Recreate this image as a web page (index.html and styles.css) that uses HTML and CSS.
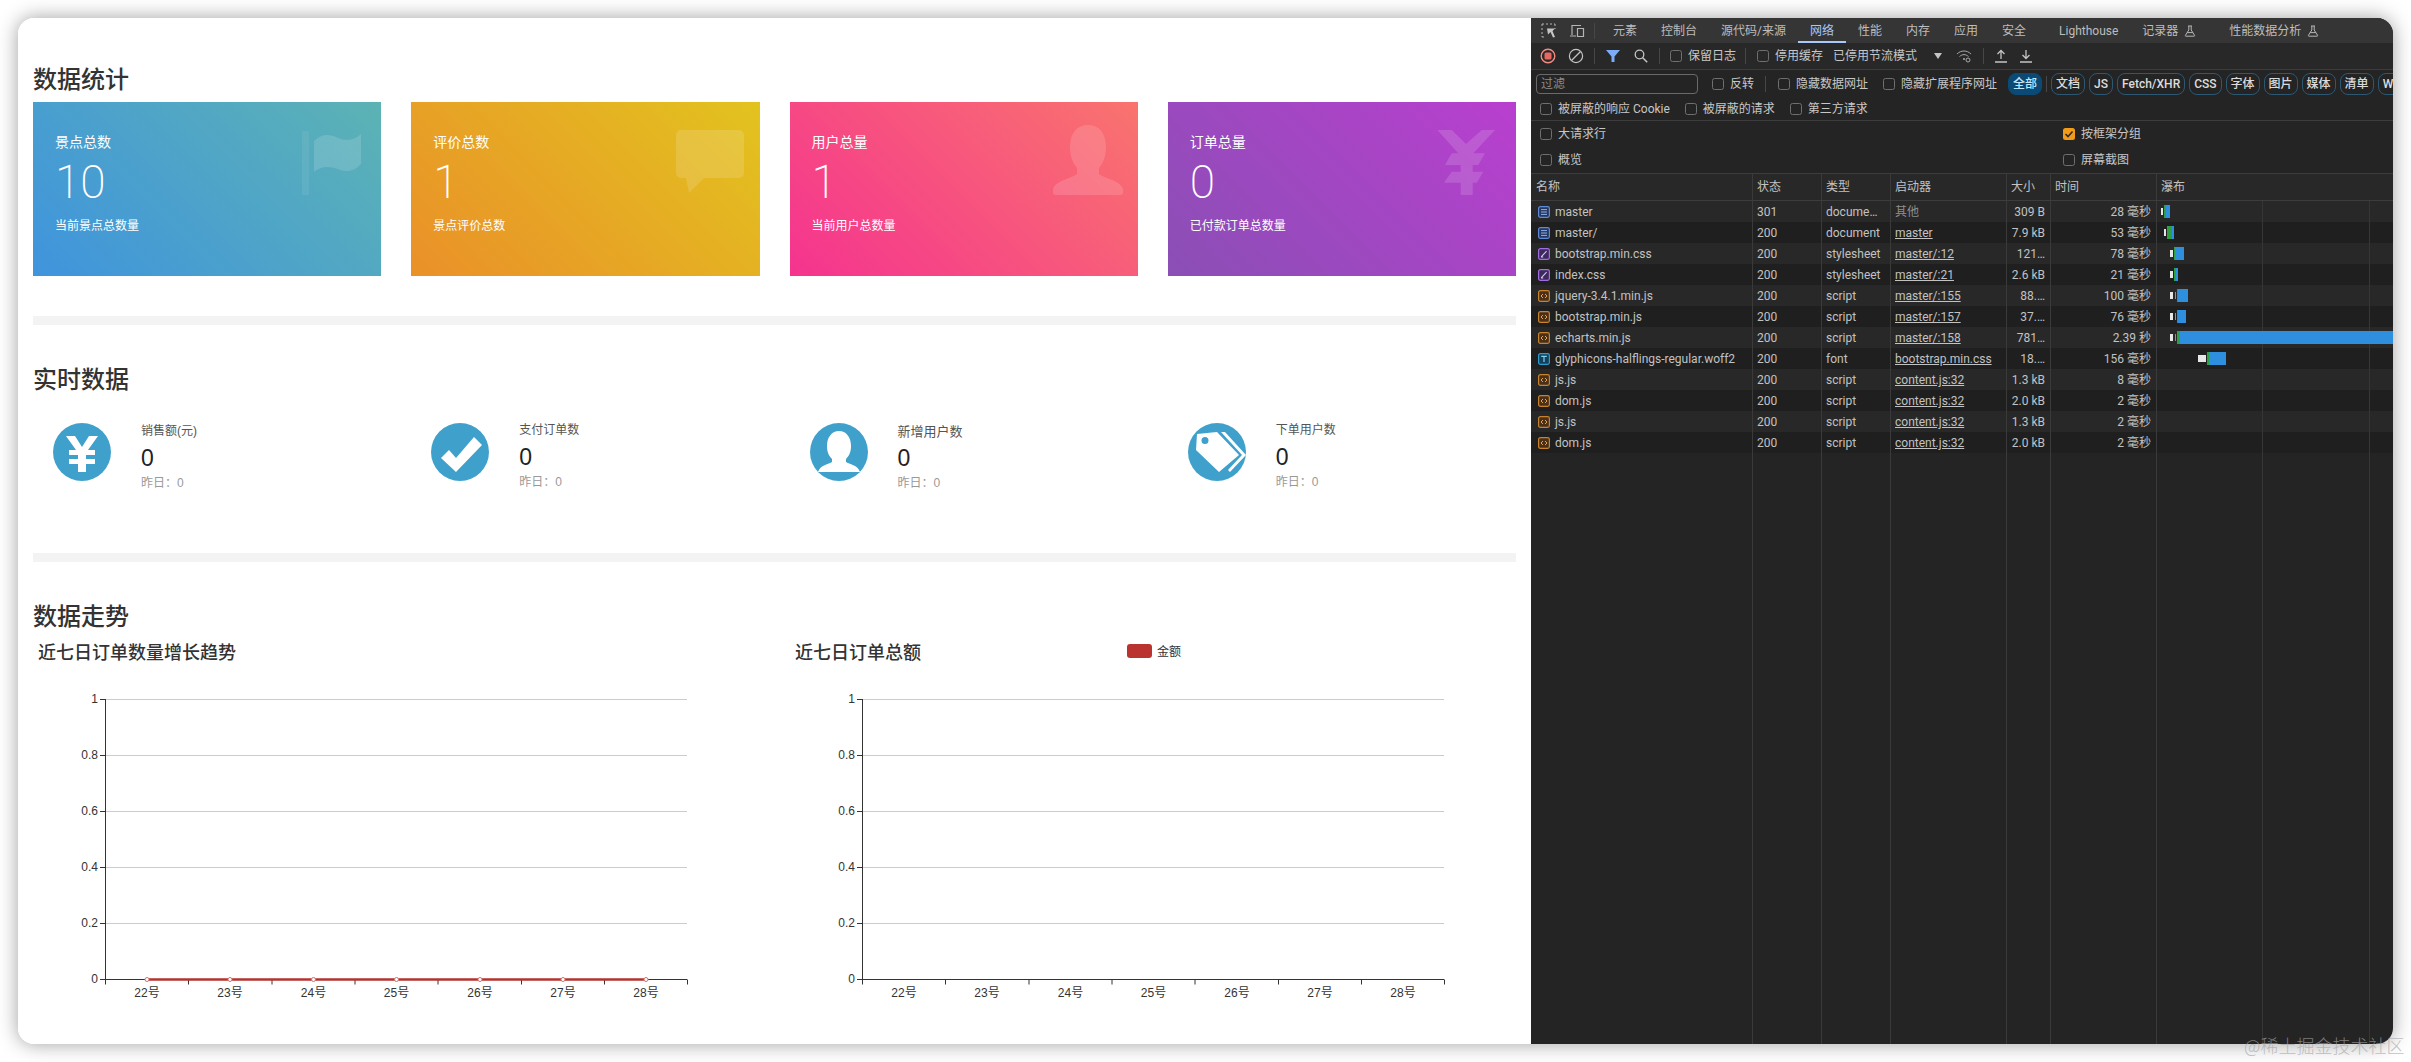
FILE: index.html
```html
<!DOCTYPE html>
<html lang="zh-CN">
<head>
<meta charset="utf-8">
<title>数据统计</title>
<link rel="stylesheet" href="styles.css">
</head>
<body>
<svg class="sprite" aria-hidden="true">
  <symbol id="f-doc" viewBox="0 0 12 12"><rect x=".6" y=".6" width="10.8" height="10.8" rx="1.8" fill="#26365c" stroke="#5f8ad8" stroke-width="1.2"/><path d="M3 3.6h6M3 6h6M3 8.4h6" stroke="#8fb0ee" stroke-width="1"/></symbol>
  <symbol id="f-css" viewBox="0 0 12 12"><rect x=".6" y=".6" width="10.8" height="10.8" rx="1.8" fill="#3d2a5c" stroke="#a06ee0" stroke-width="1.2"/><path d="M3.2 8.8 8.6 3.2M3 9h2.2" stroke="#d9c4f5" stroke-width="1.1"/></symbol>
  <symbol id="f-js" viewBox="0 0 12 12"><rect x=".6" y=".6" width="10.8" height="10.8" rx="1.8" fill="#4a3018" stroke="#c9822e" stroke-width="1.2"/><path d="M5 4 3 6l2 2M7 4l2 2-2 2" fill="none" stroke="#e5a354" stroke-width="1"/></symbol>
  <symbol id="f-font" viewBox="0 0 12 12"><rect x=".6" y=".6" width="10.8" height="10.8" rx="1.8" fill="#15405a" stroke="#2f9cd0" stroke-width="1.2"/><path d="M3.2 3.4h5.6M6 3.4v5.6" stroke="#7fd0f2" stroke-width="1.2"/></symbol>
  <symbol id="flask" viewBox="0 0 12 12"><path d="M4 1h4M4.8 1v4L1.4 10.4c-.2.4 0 .8.5.8h8.2c.5 0 .7-.4.5-.8L7.2 5V1M3.2 7.6h5.6" fill="none" stroke="#b5b5b5" stroke-width="1"/></symbol>
</svg>

<div class="window">
  <main class="page">
    <h2 class="section-title">数据统计</h2>
    <div class="cards">
      <article class="card card-blue">
        <svg class="card-icon" viewBox="0 0 70 70"><path class="faint" d="M7 6h5a1 1 0 0 1 1 1v62a1 1 0 0 1-1 1H7a1 1 0 0 1-1-1V7a1 1 0 0 1 1-1z"/><path d="M18 16c8-8 16-7 24-3 8 3 16 3 23-4v30c-6 7-14 9-23 5-9-3-17-3-24 3z"/></svg>
        <div class="card-label">景点总数</div>
        <div class="card-num">10</div>
        <div class="card-sub">当前景点总数量</div>
      </article>
      <article class="card card-orange">
        <svg class="card-icon" viewBox="0 0 70 70"><path d="M6 5h58a5 5 0 0 1 5 5v38a5 5 0 0 1-5 5H29L14 68l-3-15H6a5 5 0 0 1-5-5V10a5 5 0 0 1 5-5z"/></svg>
        <div class="card-label">评价总数</div>
        <div class="card-num">1</div>
        <div class="card-sub">景点评价总数</div>
      </article>
      <article class="card card-pink">
        <svg class="card-icon" viewBox="0 0 70 70"><path d="M35 0c11 0 18 8 18 22 0 10-3 16-7 21v6c5 4 22 7 24 15v3a3 3 0 0 1-3 3H3a3 3 0 0 1-3-3v-3c2-8 19-11 24-15v-6c-4-5-7-11-7-21C17 8 24 0 35 0z"/></svg>
        <div class="card-label">用户总量</div>
        <div class="card-num">1</div>
        <div class="card-sub">当前用户总数量</div>
      </article>
      <article class="card card-purple">
        <svg class="card-icon" viewBox="0 0 70 70"><path d="M6.300 5H20.700L35 19 50.700 5H64L42.300 28.300H54L47.300 40H41.700V46.700H52.300L45.700 57.700H41.700V70H29.700V57.700H13L20.700 46.700H29.700V40H14L20.700 28.300H27.300z"/></svg>
        <div class="card-label">订单总量</div>
        <div class="card-num">0</div>
        <div class="card-sub">已付款订单总数量</div>
      </article>
    </div>

    <div class="divider"></div>

    <h2 class="section-title section-gap">实时数据</h2>
    <div class="stats">
      <div class="stat">
        <svg class="stat-icon" viewBox="0 0 58 58"><circle cx="29" cy="29" r="29" fill="#3fa1cb"/><path fill="#fff" d="M13 13h9l7 11 7-11h9L35 27h7v5H33v4h9v5h-9v8h-8v-8h-9v-5h9v-4h-9v-5h7z"/></svg>
        <div class="stat-text">
          <div class="stat-label">销售额(元)</div>
          <div class="stat-num">0</div>
          <div class="stat-prev">昨日：0</div>
        </div>
      </div>
      <div class="stat stat-raised">
        <svg class="stat-icon" viewBox="0 0 58 58"><circle cx="29" cy="29" r="29" fill="#3fa1cb"/><path fill="#fff" d="M10 35l8-8 7 8 18-21 8 8-26 27z"/></svg>
        <div class="stat-text">
          <div class="stat-label">支付订单数</div>
          <div class="stat-num">0</div>
          <div class="stat-prev">昨日：0</div>
        </div>
      </div>
      <div class="stat">
        <svg class="stat-icon" viewBox="0 0 58 58"><circle cx="29" cy="29" r="29" fill="#3fa1cb"/><path fill="#fff" d="M29 8c7 0 12 6 12 15 0 6-2 10-5 13v3c3 2 12 3 14 10H8c2-7 11-8 14-10v-3c-3-3-5-7-5-13C17 14 22 8 29 8z"/></svg>
        <div class="stat-text">
          <div class="stat-label stat-label-lg">新增用户数</div>
          <div class="stat-num">0</div>
          <div class="stat-prev">昨日：0</div>
        </div>
      </div>
      <div class="stat stat-raised">
        <svg class="stat-icon" viewBox="0 0 58 58"><circle cx="29" cy="29" r="29" fill="#3fa1cb"/><path fill="#fff" fill-rule="evenodd" d="M9 11l20-2 22 23-20 17L8 27zM17 14a3.500 3.500 0 1 0 0 7 3.500 3.500 0 0 0 0-7z"/><path fill="#fff" d="M33 9h4l21 23-16 17-2-2 14-15z"/></svg>
        <div class="stat-text">
          <div class="stat-label">下单用户数</div>
          <div class="stat-num">0</div>
          <div class="stat-prev">昨日：0</div>
        </div>
      </div>
    </div>

    <div class="divider divider-2"></div>

    <h2 class="section-title section-gap">数据走势</h2>
    <div class="charts">
      <section class="chart">
        <div class="chart-head"><h3 class="chart-title">近七日订单数量增长趋势</h3></div>
        <svg class="chart-svg" viewBox="0 0 726 378">
          <g class="grid"><path d="M67 33.500H654M67 89.500H654M67 145.500H654M67 201.500H654M67 257.500H654"/></g>
          <g class="axis"><path d="M72.500 33V313.500M67 33.500h5.500M67 89.500h5.500M67 145.500h5.500M67 201.500h5.500M67 257.500h5.500M67 313.500H654M72.500 313.500v5M155.500 313.500v5M239 313.500v5M322 313.500v5M405 313.500v5M488.500 313.500v5M571.500 313.500v5M654.500 313.500v5"/></g>
          <path class="series" d="M114 313.500H613"/>
          <g class="markers"><circle cx="114" cy="313.500" r="2"/><circle cx="197" cy="313.500" r="2"/><circle cx="280.500" cy="313.500" r="2"/><circle cx="363.500" cy="313.500" r="2"/><circle cx="447" cy="313.500" r="2"/><circle cx="530" cy="313.500" r="2"/><circle cx="613" cy="313.500" r="2"/></g>
          <g class="ylab"><text x="65" y="37">1</text><text x="65" y="93">0.8</text><text x="65" y="149">0.6</text><text x="65" y="205">0.4</text><text x="65" y="261">0.2</text><text x="65" y="317">0</text></g>
          <g class="xlab"><text x="114" y="331">22号</text><text x="197" y="331">23号</text><text x="280.500" y="331">24号</text><text x="363.500" y="331">25号</text><text x="447" y="331">26号</text><text x="530" y="331">27号</text><text x="613" y="331">28号</text></g>
        </svg>
      </section>
      <section class="chart">
        <div class="chart-head">
          <h3 class="chart-title">近七日订单总额</h3>
          <div class="legend"><span class="legend-swatch"></span><span>金额</span></div>
        </div>
        <svg class="chart-svg" viewBox="0 0 726 378">
          <g class="grid"><path d="M67 33.500H654M67 89.500H654M67 145.500H654M67 201.500H654M67 257.500H654"/></g>
          <g class="axis"><path d="M72.500 33V313.500M67 33.500h5.500M67 89.500h5.500M67 145.500h5.500M67 201.500h5.500M67 257.500h5.500M67 313.500H654M72.500 313.500v5M155.500 313.500v5M239 313.500v5M322 313.500v5M405 313.500v5M488.500 313.500v5M571.500 313.500v5M654.500 313.500v5"/></g>
          <g class="ylab"><text x="65" y="37">1</text><text x="65" y="93">0.8</text><text x="65" y="149">0.6</text><text x="65" y="205">0.4</text><text x="65" y="261">0.2</text><text x="65" y="317">0</text></g>
          <g class="xlab"><text x="114" y="331">22号</text><text x="197" y="331">23号</text><text x="280.500" y="331">24号</text><text x="363.500" y="331">25号</text><text x="447" y="331">26号</text><text x="530" y="331">27号</text><text x="613" y="331">28号</text></g>
        </svg>
      </section>
    </div>
  </main>

  <aside class="devtools">
    <nav class="dt-tabs">
      <svg class="tab-ico" viewBox="0 0 15 15"><path d="M1 1h2M5 1h2M9 1h2M13 1h1M1 1v2M1 5v2M1 9v2M1 13v1M1 14h2M14 1v2M14 5v1" fill="none" stroke="#b5b5b5" stroke-width="1"/><path d="M6 5.500h8L11.500 8 14 14l-2 .5L9.500 9 7 11.500z" fill="#c5c5c5"/></svg>
      <svg class="tab-ico tab-ico-2" viewBox="0 0 15 15"><path d="M2 12V2.500h9M0 13h6M7.500 5.500h6v8h-6z" fill="none" stroke="#b5b5b5" stroke-width="1.200"/></svg>
      <span class="sep sep-tab"></span>
      <a class="tab tab-first">元素</a>
      <a class="tab">控制台</a>
      <a class="tab">源代码/来源</a>
      <a class="tab tab-on">网络</a>
      <a class="tab">性能</a>
      <a class="tab">内存</a>
      <a class="tab">应用</a>
      <a class="tab">安全</a>
      <a class="tab tab-lh">Lighthouse</a>
      <a class="tab">记录器<svg class="flask"><use href="#flask"/></svg></a>
      <a class="tab tab-perf">性能数据分析<svg class="flask"><use href="#flask"/></svg></a>
    </nav>

    <div class="dt-toolbar">
      <svg class="ti g9" viewBox="0 0 16 16"><circle cx="8" cy="8" r="6.800" fill="none" stroke="#f28b82" stroke-width="1.400"/><rect x="4.500" y="4.500" width="7" height="7" rx="1.500" fill="#e46962"/></svg>
      <svg class="ti g12" viewBox="0 0 16 16"><circle cx="8" cy="8" r="6.600" fill="none" stroke="#c4c4c4" stroke-width="1.200"/><path d="M3.500 12.500l9-9" stroke="#c4c4c4" stroke-width="1.200"/></svg>
      <span class="sep g10"></span>
      <svg class="ti-s g11" viewBox="0 0 14 14"><path d="M0 1h14L8.500 7.500V13h-3V7.500z" fill="#7cacf8"/></svg>
      <svg class="ti-s g14" viewBox="0 0 14 14"><circle cx="5.500" cy="5.500" r="4.300" fill="none" stroke="#c4c4c4" stroke-width="1.300"/><path d="M8.700 8.700l4.500 4.500" stroke="#c4c4c4" stroke-width="1.500"/></svg>
      <span class="sep g11"></span>
      <span class="cb g10"></span><span class="lbl g6">保留日志</span>
      <span class="sep g9"></span>
      <span class="cb g11"></span><span class="lbl g6">停用缓存</span>
      <span class="lbl g10">已停用节流模式</span>
      <svg class="ti-a g17" viewBox="0 0 8 6"><path d="M0 0h8L4 6z" fill="#c4c4c4"/></svg>
      <svg class="ti g14" viewBox="0 0 16 16"><path d="M1 6c4-4 10-4 14 0M3.500 8.500c3-2.500 6-2.500 9 0" fill="none" stroke="#a8a8a8" stroke-width="1"/><circle cx="8" cy="11" r="1" fill="#a8a8a8"/><circle cx="12" cy="12" r="2" fill="none" stroke="#a8a8a8" stroke-width="1"/></svg>
      <span class="sep g11"></span>
      <svg class="ti-u g11" viewBox="0 0 12 14"><path d="M6 10V2M2.500 5L6 1.500 9.500 5M0 13h12" fill="none" stroke="#c4c4c4" stroke-width="1.300"/></svg>
      <svg class="ti-u g13" viewBox="0 0 12 14"><path d="M6 1v8M2.500 6L6 9.500 9.500 6M0 13h12" fill="none" stroke="#c4c4c4" stroke-width="1.300"/></svg>
    </div>

    <div class="dt-filter">
      <div class="filter-row">
        <span class="filter-input">过滤</span>
        <span class="cb g14"></span><span class="lbl g6">反转</span>
        <span class="sep g11"></span>
        <span class="cb g12"></span><span class="lbl g6">隐藏数据网址</span>
        <span class="cb g15"></span><span class="lbl g6">隐藏扩展程序网址</span>
        <span class="chip chip-on g11">全部</span>
        <span class="sep g4"></span>
        <span class="chip g4">文档</span>
        <span class="chip g4">JS</span>
        <span class="chip g4">Fetch/XHR</span>
        <span class="chip g4">CSS</span>
        <span class="chip g4">字体</span>
        <span class="chip g4">图片</span>
        <span class="chip g4">媒体</span>
        <span class="chip g4">清单</span>
        <span class="chip g4">WS</span>
      </div>
      <div class="filter-row filter-row-2">
        <span class="cb"></span><span class="lbl g6">被屏蔽的响应 Cookie</span>
        <span class="cb g15"></span><span class="lbl g6">被屏蔽的请求</span>
        <span class="cb g15"></span><span class="lbl g6">第三方请求</span>
      </div>
    </div>

    <div class="dt-settings">
      <div class="setting"><span class="cb"></span><span class="lbl g6">大请求行</span></div>
      <div class="setting"><span class="cb cb-on"><svg viewBox="0 0 12 12"><path d="M2.500 6l2.500 2.500 4.500-5" fill="none" stroke="#2a2a2a" stroke-width="1.600"/></svg></span><span class="lbl g6">按框架分组</span></div>
      <div class="setting"><span class="cb"></span><span class="lbl g6">概览</span></div>
      <div class="setting"><span class="cb"></span><span class="lbl g6">屏幕截图</span></div>
    </div>

    <div class="net">
      <div class="net-row net-head">
        <div class="c c-name">名称</div><div class="c">状态</div><div class="c">类型</div><div class="c">启动器</div><div class="c">大小</div><div class="c">时间</div><div class="c c-wf">瀑布</div>
      </div>
      <div class="net-body">
        <div class="net-row">
          <div class="c c-name"><svg class="fi"><use href="#f-doc"/></svg>master</div><div class="c">301</div><div class="c">docume…</div><div class="c c-dim">其他</div><div class="c c-r">309 B</div><div class="c c-r">28 毫秒</div>
          <div class="c c-wf"><i class="b b-w" style="left:4px;width:2px"></i><i class="b b-g" style="left:7px;width:2px"></i><i class="b b-b" style="left:9px;width:4px"></i></div>
        </div>
        <div class="net-row">
          <div class="c c-name"><svg class="fi"><use href="#f-doc"/></svg>master/</div><div class="c">200</div><div class="c">document</div><div class="c c-link">master</div><div class="c c-r">7.9 kB</div><div class="c c-r">53 毫秒</div>
          <div class="c c-wf"><i class="b b-w" style="left:7px;width:2px"></i><i class="b b-g" style="left:10px;width:5px"></i><i class="b b-b" style="left:15px;width:2px"></i></div>
        </div>
        <div class="net-row">
          <div class="c c-name"><svg class="fi"><use href="#f-css"/></svg>bootstrap.min.css</div><div class="c">200</div><div class="c">stylesheet</div><div class="c c-link">master/:12</div><div class="c c-r">121…</div><div class="c c-r">78 毫秒</div>
          <div class="c c-wf"><i class="b b-w" style="left:13px;width:3px"></i><i class="b b-g" style="left:17px;width:1px"></i><i class="b b-b" style="left:18px;width:9px"></i></div>
        </div>
        <div class="net-row">
          <div class="c c-name"><svg class="fi"><use href="#f-css"/></svg>index.css</div><div class="c">200</div><div class="c">stylesheet</div><div class="c c-link">master/:21</div><div class="c c-r">2.6 kB</div><div class="c c-r">21 毫秒</div>
          <div class="c c-wf"><i class="b b-w" style="left:13px;width:3px"></i><i class="b b-g" style="left:17px;width:2px"></i><i class="b b-b" style="left:19px;width:2px"></i></div>
        </div>
        <div class="net-row">
          <div class="c c-name"><svg class="fi"><use href="#f-js"/></svg>jquery-3.4.1.min.js</div><div class="c">200</div><div class="c">script</div><div class="c c-link">master/:155</div><div class="c c-r">88.…</div><div class="c c-r">100 毫秒</div>
          <div class="c c-wf"><i class="b b-w" style="left:13px;width:3px"></i><i class="b b-o" style="left:18px;width:1px"></i><i class="b b-g" style="left:20px;width:1px"></i><i class="b b-b" style="left:21px;width:10px"></i></div>
        </div>
        <div class="net-row">
          <div class="c c-name"><svg class="fi"><use href="#f-js"/></svg>bootstrap.min.js</div><div class="c">200</div><div class="c">script</div><div class="c c-link">master/:157</div><div class="c c-r">37.…</div><div class="c c-r">76 毫秒</div>
          <div class="c c-wf"><i class="b b-w" style="left:13px;width:3px"></i><i class="b b-o" style="left:18px;width:1px"></i><i class="b b-g" style="left:20px;width:1px"></i><i class="b b-b" style="left:21px;width:8px"></i></div>
        </div>
        <div class="net-row">
          <div class="c c-name"><svg class="fi"><use href="#f-js"/></svg>echarts.min.js</div><div class="c">200</div><div class="c">script</div><div class="c c-link">master/:158</div><div class="c c-r">781…</div><div class="c c-r">2.39 秒</div>
          <div class="c c-wf"><i class="b b-w" style="left:13px;width:3px"></i><i class="b b-o" style="left:18px;width:1px"></i><i class="b b-g" style="left:20px;width:3px"></i><i class="b b-b" style="left:23px;width:213px"></i></div>
        </div>
        <div class="net-row">
          <div class="c c-name"><svg class="fi"><use href="#f-font"/></svg>glyphicons-halflings-regular.woff2</div><div class="c">200</div><div class="c">font</div><div class="c c-link">bootstrap.min.css</div><div class="c c-r">18.…</div><div class="c c-r">156 毫秒</div>
          <div class="c c-wf"><i class="b b-w" style="left:41px;width:8px"></i><i class="b b-g" style="left:50px;width:2px"></i><i class="b b-b" style="left:52px;width:17px"></i></div>
        </div>
        <div class="net-row">
          <div class="c c-name"><svg class="fi"><use href="#f-js"/></svg>js.js</div><div class="c">200</div><div class="c">script</div><div class="c c-link">content.js:32</div><div class="c c-r">1.3 kB</div><div class="c c-r">8 毫秒</div><div class="c c-wf"></div>
        </div>
        <div class="net-row">
          <div class="c c-name"><svg class="fi"><use href="#f-js"/></svg>dom.js</div><div class="c">200</div><div class="c">script</div><div class="c c-link">content.js:32</div><div class="c c-r">2.0 kB</div><div class="c c-r">2 毫秒</div><div class="c c-wf"></div>
        </div>
        <div class="net-row">
          <div class="c c-name"><svg class="fi"><use href="#f-js"/></svg>js.js</div><div class="c">200</div><div class="c">script</div><div class="c c-link">content.js:32</div><div class="c c-r">1.3 kB</div><div class="c c-r">2 毫秒</div><div class="c c-wf"></div>
        </div>
        <div class="net-row">
          <div class="c c-name"><svg class="fi"><use href="#f-js"/></svg>dom.js</div><div class="c">200</div><div class="c">script</div><div class="c c-link">content.js:32</div><div class="c c-r">2.0 kB</div><div class="c c-r">2 毫秒</div><div class="c c-wf"></div>
        </div>
      </div>
      <div class="net-row net-fill">
        <div class="c"></div><div class="c"></div><div class="c"></div><div class="c"></div><div class="c"></div><div class="c"></div><div class="c c-wf"></div>
      </div>
    </div>
  </aside>
</div>
<div class="watermark">@稀土掘金技术社区</div>
</body>
</html>
```

FILE: styles.css
```css
* { box-sizing: border-box; }
html, body { margin: 0; height: 100%; }
body {
  position: relative;
  width: 2411px;
  height: 1062px;
  padding: 18px;
  overflow: hidden;
  background: #fff;
  font-family: "Liberation Sans", "Noto Sans CJK SC", sans-serif;
}
.sprite { position: absolute; width: 0; height: 0; }

.window {
  display: flex;
  width: 2375px;
  height: 1026px;
  border-radius: 16px;
  overflow: hidden;
  box-shadow: 0 0 20px rgba(0, 0, 0, .38);
}

/* left page */
.page {
  flex: none;
  width: 1513px;
  height: 100%;
  padding: 44px 15px 0;
  background: #fff;
  overflow: hidden;
}
.section-title {
  margin: 0 0 6px;
  padding-top: 2px;
  font-size: 24px;
  line-height: 32px;
  font-weight: 500;
  color: #333;
}
.section-gap { margin-top: 37px; margin-bottom: 0; }

.cards {
  display: grid;
  grid-template-columns: repeat(4, 1fr);
  gap: 30px;
}
.card {
  position: relative;
  height: 174px;
  padding-top: 30px;
  padding-left: 22px;
  color: #fff;
  overflow: hidden;
}
.card-blue { background: linear-gradient(45deg, #3f94dd, #5cb3b4); }
.card-orange { background: linear-gradient(45deg, #ea9029, #e2c31f); }
.card-pink { background: linear-gradient(45deg, #f5338f, #f9746e); }
.card-purple { background: linear-gradient(45deg, #8a4fb5, #b93fcf); }
.card-icon {
  position: absolute;
  top: 23px;
  right: 15px;
  width: 70px;
  height: 70px;
  fill: rgba(255, 255, 255, .14);
}
.card-icon .faint { fill: rgba(255, 255, 255, .07); }
.card-label { font-size: 14px; line-height: 20px; }
.card-num {
  margin-top: 5px;
  font-family: Roboto, "Liberation Sans", sans-serif;
  font-weight: 200;
  font-size: 46px;
  line-height: 50px;
}
.card-sub { margin-top: 11px; font-size: 12px; line-height: 17px; }

.divider { height: 9px; margin-top: 40px; background: #f3f3f3; }
.divider-2 { margin-top: 61px; }

.stats {
  display: grid;
  grid-template-columns: repeat(4, 1fr);
  gap: 30px;
  margin-top: 27px;
  height: 69px;
}
.stat { display: flex; padding-left: 20px; gap: 30px; }
.stat-icon { flex: none; width: 58px; height: 58px; }
.stat-text { display: flex; flex-direction: column; }
.stat-raised .stat-text { margin-top: -1px; }
.stat-label { font-size: 12px; line-height: 17px; color: #555; }
.stat-label-lg { font-size: 13px; }
.stat-num { margin-top: 3px; font-size: 23px; line-height: 30px; color: #222; }
.stat-prev { margin-top: 2px; font-size: 12px; line-height: 17px; color: #999; }

.charts {
  display: grid;
  grid-template-columns: 757px 726px;
  margin-top: 7px;
}
.chart-head {
  display: flex;
  align-items: center;
  height: 26px;
  padding-left: 5px;
}
.chart-title {
  margin: 0;
  font-size: 18px;
  line-height: 26px;
  font-weight: 500;
  color: #333;
}
.legend {
  display: flex;
  align-items: center;
  gap: 5px;
  margin-left: 206px;
  margin-top: -5px;
  font-size: 12px;
  color: #333;
}
.legend-swatch {
  width: 25px;
  height: 14px;
  border-radius: 3px;
  background: #bb3330;
}
.chart-svg { display: block; width: 726px; height: 378px; }
.grid path { fill: none; stroke: #ccc; stroke-width: 1; }
.axis path { fill: none; stroke: #333; stroke-width: 1; }
.series { fill: none; stroke: #b5322e; stroke-width: 2.5; }
.markers circle { fill: #fff; stroke: #d0716e; stroke-width: 1; }
.ylab text, .xlab text {
  font-size: 12px;
  fill: #333;
  font-family: "Liberation Sans", "Noto Sans CJK SC", sans-serif;
}
.ylab text { text-anchor: end; }
.xlab text { text-anchor: middle; }

/* devtools */
.devtools {
  flex: 1;
  min-width: 0;
  display: flex;
  flex-direction: column;
  background: #242424;
  color: #c4c4c4;
  font-family: Roboto, "Noto Sans CJK SC", sans-serif;
  font-size: 12px;
  line-height: 16px;
  overflow: hidden;
}
.dt-tabs {
  flex: none;
  display: flex;
  align-items: center;
  height: 25px;
  padding-left: 10px;
  background: #353535;
}
.tab-ico { flex: none; width: 15px; height: 15px; }
.tab-ico-2 { margin-left: 14px; }
.sep { flex: none; width: 1px; height: 16px; background: #474747; }
.sep-tab { margin-left: 9px; margin-right: 6px; }
.tab {
  flex: none;
  display: flex;
  align-items: center;
  height: 100%;
  padding: 0 12px;
  color: #bdbdbd;
  white-space: nowrap;
}
.tab-on {
  color: #a8c7fa;
  box-shadow: inset 0 -2px 0 #a8c7fa;
}
.tab-lh { margin-left: 9px; }
.tab-perf { margin-left: 9px; }
.flask { flex: none; width: 12px; height: 12px; margin-left: 6px; }

.dt-toolbar {
  flex: none;
  display: flex;
  align-items: center;
  height: 27px;
  border-bottom: 1px solid #3d3d3d;
  background: #282828;
}
.ti { flex: none; width: 16px; height: 16px; }
.ti-s { flex: none; width: 14px; height: 14px; }
.ti-a { flex: none; width: 8px; height: 6px; }
.ti-u { flex: none; width: 12px; height: 14px; }
.lbl { flex: none; white-space: nowrap; color: #c7c7c7; }
.cb {
  flex: none;
  display: block;
  width: 12px;
  height: 12px;
  border: 1px solid #6f6f6f;
  border-radius: 2.500px;
}
.cb-on { border: 0; background: #f29b18; }
.cb-on svg { display: block; width: 12px; height: 12px; }

.g4 { margin-left: 4px; }
.g6 { margin-left: 6px; }
.g9 { margin-left: 9px; }
.g10 { margin-left: 10px; }
.g11 { margin-left: 11px; }
.g12 { margin-left: 12px; }
.g13 { margin-left: 13px; }
.g14 { margin-left: 14px; }
.g15 { margin-left: 15px; }
.g17 { margin-left: 17px; }

.dt-filter {
  flex: none;
  height: 51px;
  border-bottom: 1px solid #3d3d3d;
  background: #242424;
}
.filter-row {
  display: flex;
  align-items: center;
  height: 28px;
  padding-left: 5px;
  overflow: hidden;
}
.filter-row-2 { height: 22px; padding-left: 9px; }
.filter-input {
  flex: none;
  width: 162px;
  height: 20px;
  padding-left: 4px;
  border: 1px solid #6a6a6a;
  border-radius: 4px;
  line-height: 18px;
  color: #8c8c8c;
}
.chip {
  flex: none;
  height: 22px;
  padding: 0 4px;
  border: 1px solid #2c5873;
  border-radius: 8px;
  line-height: 20px;
  font-weight: 500;
  color: #dcdcdc;
  white-space: nowrap;
}
.chip-on { background: #0b4a75; border-color: #0b4a75; color: #c2e7ff; }

.dt-settings {
  flex: none;
  display: grid;
  grid-template-columns: 523px 1fr;
  grid-auto-rows: 26px;
  height: 53px;
  padding-left: 9px;
  border-bottom: 1px solid #3d3d3d;
  background: #242424;
}
.setting { display: flex; align-items: center; }

.net { flex: 1; min-height: 0; display: flex; flex-direction: column; }
.net-row {
  display: grid;
  grid-template-columns: 222px 69px 69px 116px 44px 106px 1fr;
  height: 21px;
  line-height: 21px;
}
.net-head {
  flex: none;
  height: 27px;
  line-height: 26px;
  border-bottom: 1px solid #3d3d3d;
  background: #282828;
}
.net-body { flex: none; }
.net-body .net-row:nth-child(odd) { background: #282828; }
.net-body .net-row:nth-child(even) { background: #1f1f1f; }
.net-body .c { padding-top: 1px; }
.net-fill { flex: 1; height: auto; }
.c {
  position: relative;
  min-width: 0;
  padding: 0 4px;
  border-right: 1px solid #3a3a3a;
  color: #c2c2c2;
  white-space: nowrap;
  overflow: hidden;
}
.c-name {
  display: flex;
  align-items: center;
  padding-left: 7px;
  gap: 5px;
}
.net-head .c-name { padding-left: 5px; }
.fi { flex: none; width: 12px; height: 12px; }
.c-dim { color: #8e8e8e; }
.c-link { text-decoration: underline; }
.c-r { padding-right: 5px; text-align: right; }
.c-wf {
  border-right: 0;
  background-image: linear-gradient(#363636, #363636), linear-gradient(#363636, #363636);
  background-size: 1px 100%;
  background-repeat: no-repeat;
  background-position: 105px 0, 212px 0;
}
.net-head .c-wf { background-image: none; }
.b {
  position: absolute;
  top: 4px;
  height: 13px;
  display: block;
}
.b-w { top: 7px; height: 7px; background: #e8e8e8; }
.b-g { background: #2ea043; }
.b-b { background: #2f8fdf; }
.b-o { top: 7px; height: 7px; background: #c58a2b; }

.watermark {
  position: absolute;
  left: 2244px;
  top: 1033px;
  font-family: "Noto Sans CJK SC", sans-serif;
  font-size: 18px;
  font-weight: 300;
  line-height: 24px;
  color: rgba(165, 165, 165, .7);
  white-space: nowrap;
}
```
